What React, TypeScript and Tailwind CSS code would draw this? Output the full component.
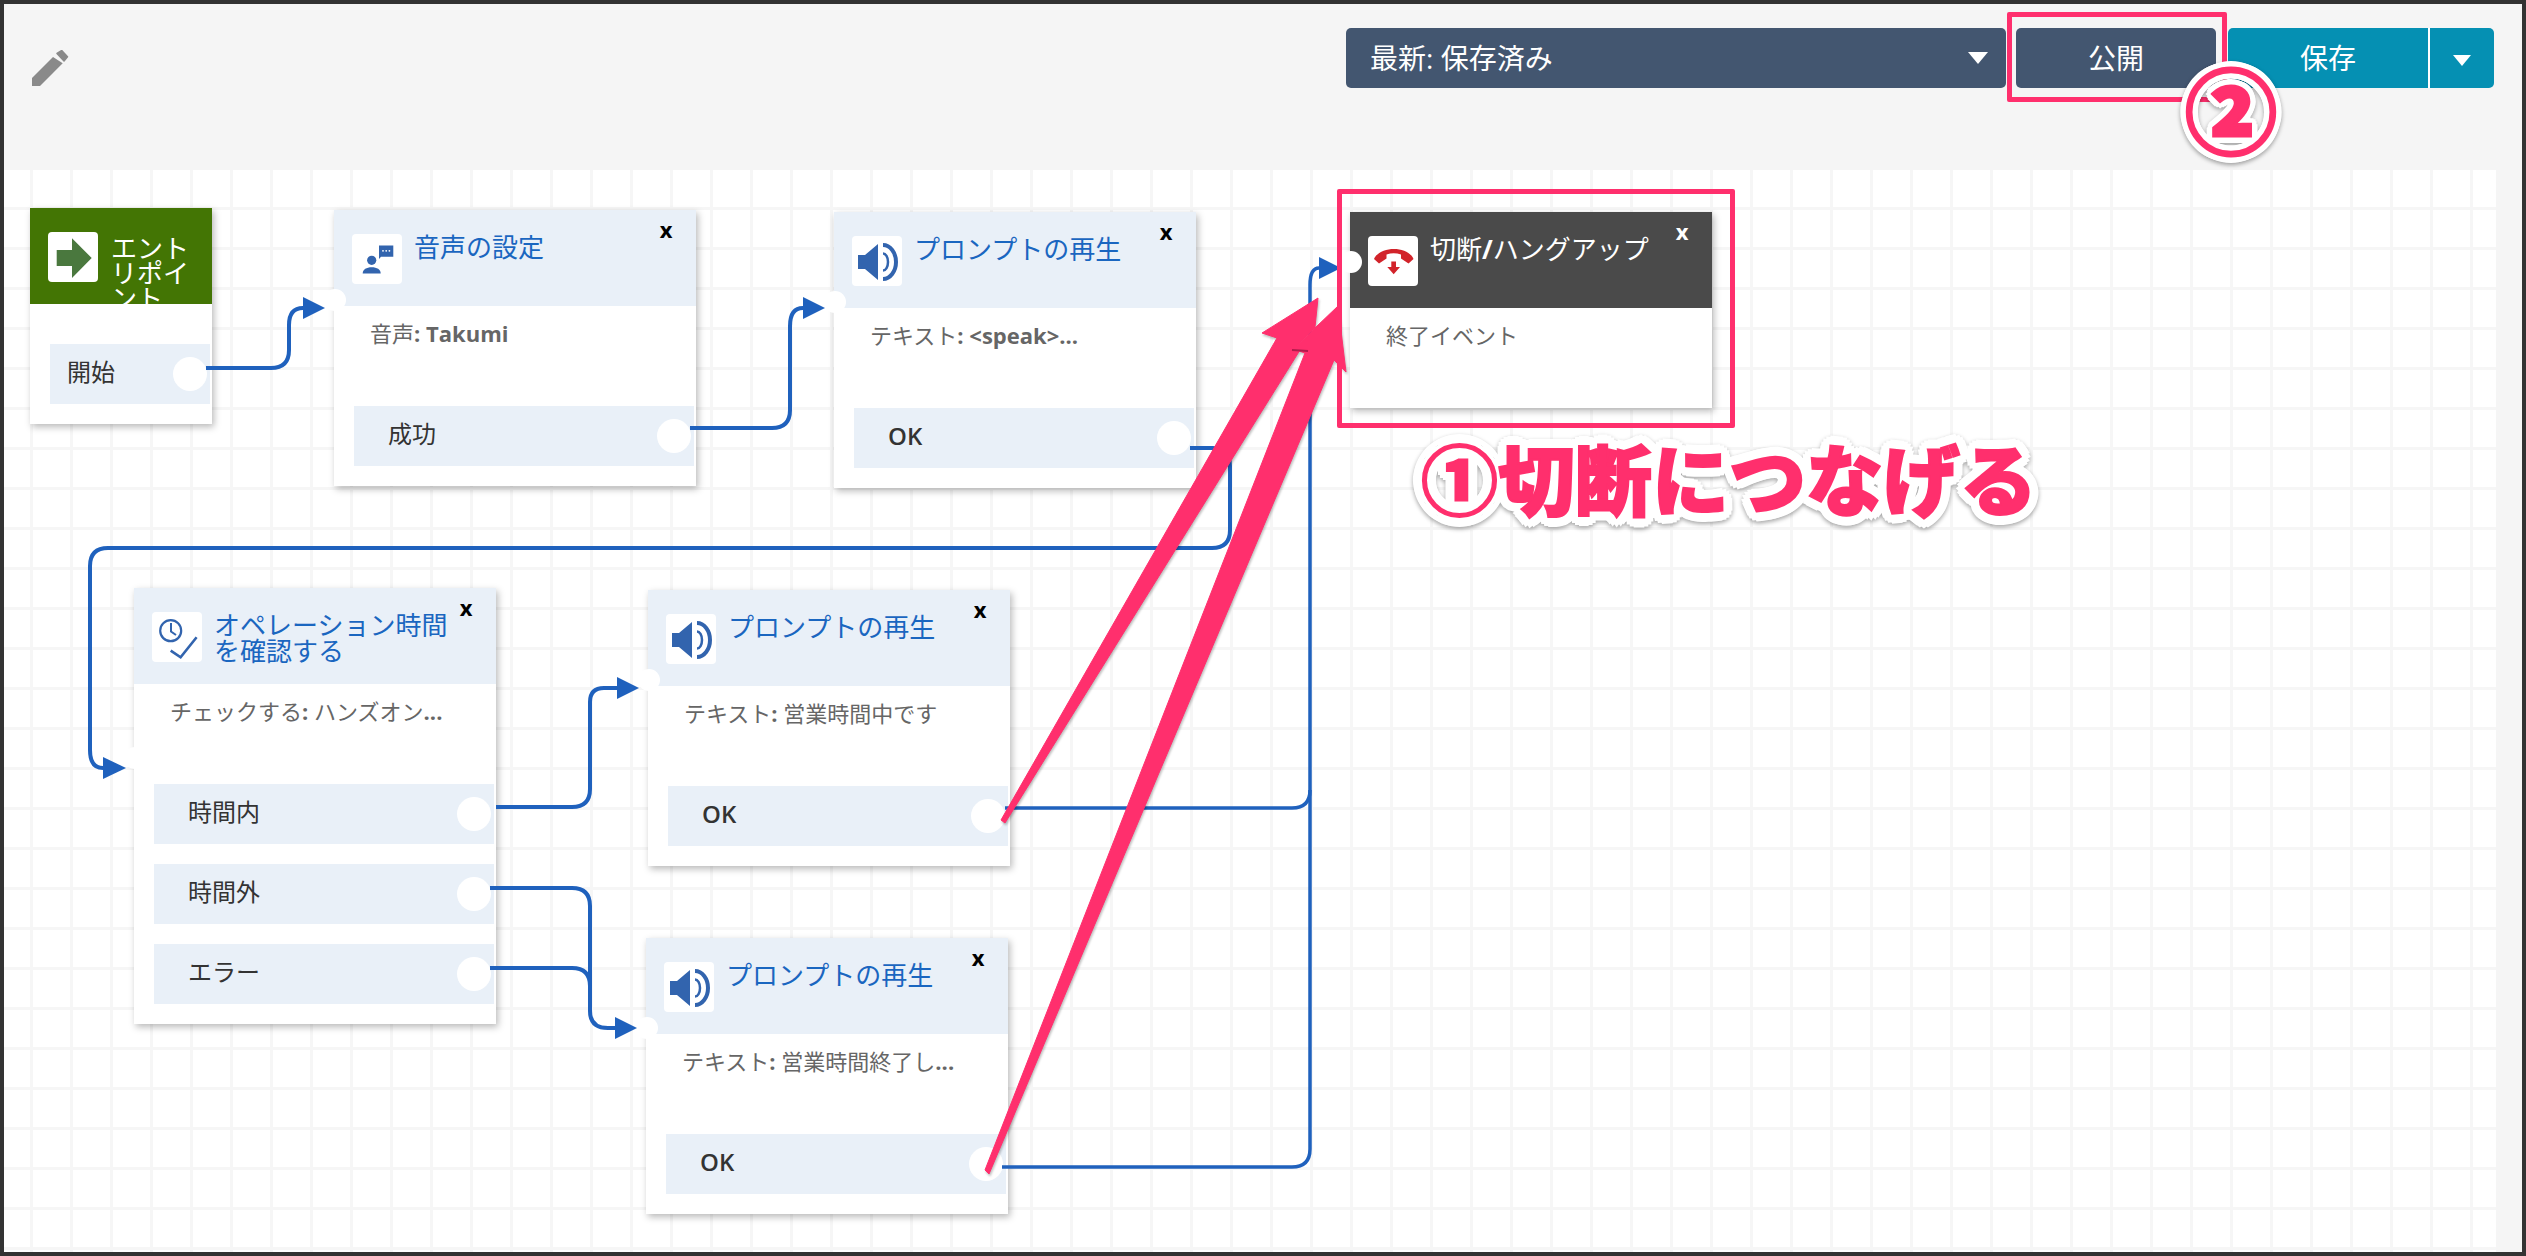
import React from "react";

const BLUE = "#3264ae";

function Speaker() {
  return (
    <svg viewBox="0 0 50 50" className="w-[50px] h-[50px]">
      <path d="M6 19H13L26 8V44L13 33H6Z" fill={BLUE} />
      <path d="M31 9A13 17 0 0 1 31 43" fill="none" stroke={BLUE} strokeWidth="4" />
      <path d="M31 17.5A5 8.5 0 0 1 31 34.5" fill="none" stroke={BLUE} strokeWidth="2.5" />
    </svg>
  );
}

function EntryArrow() {
  return (
    <svg viewBox="0 0 50 50" className="w-[50px] h-[50px]">
      <path d="M8.7 18H24V6.3L43.7 26 24 46V34H8.7Z" fill="#4a783e" />
    </svg>
  );
}

function Person() {
  return (
    <svg viewBox="0 0 50 50" className="w-[50px] h-[50px]">
      <circle cx="19.7" cy="26.3" r="4.6" fill={BLUE} />
      <path d="M10.7 39.5C10.7 35.5 14.5 33.3 19.7 33.3S28.7 35.5 28.7 39.5Z" fill={BLUE} />
      <path d="M27 11.5H41.3V22.7H29L27 25Z" fill={BLUE} />
      <circle cx="31" cy="16.8" r="0.9" fill="#fff" />
      <circle cx="34.2" cy="16.8" r="0.9" fill="#fff" />
      <circle cx="37.4" cy="16.8" r="0.9" fill="#fff" />
    </svg>
  );
}

function ClockCheck() {
  return (
    <svg viewBox="0 0 50 50" className="w-[50px] h-[50px]">
      <circle cx="18.7" cy="18.7" r="10.5" fill="none" stroke={BLUE} strokeWidth="2.2" />
      <path d="M19 11V19.5L24 23" fill="none" stroke={BLUE} strokeWidth="2" />
      <path d="M18.7 38.7L28.6 45.3L44.6 25.3" fill="none" stroke={BLUE} strokeWidth="2.6" />
    </svg>
  );
}

function Hangup() {
  return (
    <svg viewBox="0 0 50 50" className="w-[50px] h-[50px]">
      <path d="M6 23C12 9.5 40 9.5 45.5 23L40.5 27.5L33 22.5V18.5C28 16.8 23.5 16.8 18.5 18.5V22.5L11 27.5Z" fill="#d2232a" />
      <path d="M23.3 25.5H28V31H32L25.7 38.3 19.3 31H23.3Z" fill="#d2232a" />
    </svg>
  );
}

function IconBox({ children }: { children: React.ReactNode }) {
  return <div className="w-[50px] h-[50px] shrink-0 bg-white rounded-[4px]">{children}</div>;
}

function Row({ label, wide = true }: { label: string; wide?: boolean }) {
  return (
    <div className={`relative h-[60px] bg-[#e9f0f8] flex items-center pb-[4px] text-[24px] text-[#333] ${wide ? "pl-[34px]" : "pl-[17px]"}`}>
      <span className={label === "OK" ? "font-semibold" : "font-normal"}>{label}</span>
      <div className="absolute right-[3px] top-[13px] w-[34px] h-[34px] rounded-full bg-white" />
    </div>
  );
}

function Close({ light = false }: { light?: boolean }) {
  return (
    <div className={`absolute left-[322px] top-[5px] w-[20px] text-center text-[22px] leading-[28px] font-bold ${light ? "text-white" : "text-black"}`}>
      x
    </div>
  );
}

function Input({ className }: { className: string }) {
  return <div className={`absolute left-[-10px] w-[22px] h-[22px] rounded-full bg-white ${className}`} />;
}

function Node({
  pos,
  title,
  icon,
  body,
  rows,
  inputTop,
}: {
  pos: string;
  title: React.ReactNode;
  icon: React.ReactNode;
  body: React.ReactNode;
  rows: string[];
  inputTop: string;
}) {
  return (
    <div className={`absolute w-[362px] flex flex-col bg-white shadow-[2px_3px_7px_rgba(0,0,0,0.28)] ${pos}`}>
      <div className="h-[96px] bg-[#e9f0f8] flex items-start pt-[24px] pl-[18px] gap-[12px]">
        <IconBox>{icon}</IconBox>
        <div className="w-[240px] text-[26px] leading-[26px] text-[#1a66c0]">{title}</div>
      </div>
      <div className="h-[100px] pt-[11px] pl-[36px] text-[22px] leading-[32px] text-[#666]">{body}</div>
      {rows.length > 0 && (
        <div className="flex flex-col gap-[20px] pl-[20px] pr-[2px] pb-[20px]">
          {rows.map((r) => (
            <Row key={r} label={r} />
          ))}
        </div>
      )}
      <Close />
      <Input className={inputTop} />
    </div>
  );
}

function Pencil() {
  return (
    <svg viewBox="0 0 37 37" className="w-[37px] h-[37px] ml-[28px] mt-[46px] mr-auto">
      <path d="M0 36V28L21 7L30.7 13.3L8 36Z" fill="#8a8a8a" />
      <path d="M25 3.5L29.7 0.5L35.5 6.7L32 11Z" fill="#8a8a8a" stroke="#8a8a8a" strokeWidth="1.5" strokeLinejoin="round" />
    </svg>
  );
}

export default function App() {
  return (
    <div className="relative w-[2526px] h-[1256px] p-1 bg-[#333] overflow-hidden font-['Open_Sans','Noto_Sans_CJK_JP',sans-serif]">
      <div className="flex flex-col h-full bg-[#f5f5f5]">
        <header className="h-[166px] shrink-0 flex items-start pr-[28px]">
          <Pencil />
          <div className="flex items-center mt-[24px] text-white text-[28px]">
            <div className="w-[660px] h-[60px] rounded-[5px] bg-[#435670] flex items-center pl-[24px] pr-[18px]">
              <span className="mr-auto">最新: 保存済み</span>
              <span className="w-0 h-0 border-x-[10px] border-t-[12px] border-x-transparent border-t-white" />
            </div>
            <div className="ml-[10px] w-[200px] h-[60px] rounded-[5px] bg-[#435670] flex items-center justify-center">公開</div>
            <div className="ml-[12px] w-[202px] h-[60px] rounded-l-[5px] bg-[#0590b3] flex items-center justify-center border-r-2 border-white">保存</div>
            <div className="w-[64px] h-[60px] rounded-r-[5px] bg-[#0590b3] flex items-center justify-center pt-[4px]">
              <span className="w-0 h-0 border-x-[9px] border-t-[11px] border-x-transparent border-t-white" />
            </div>
          </div>
        </header>
        <main className="relative flex-1 mr-[26px] bg-white bg-[linear-gradient(to_right,#f6f6f6_3px,transparent_3px),linear-gradient(to_bottom,#f6f6f6_3px,transparent_3px)] bg-[size:40px_40px] bg-[position:26px_37px]">
          {/* Entry */}
          <div className="absolute left-[26px] top-[38px] w-[182px] h-[216px] flex flex-col bg-white shadow-[2px_3px_7px_rgba(0,0,0,0.28)]">
            <div className="h-[96px] shrink-0 overflow-hidden bg-[#437504] flex items-start pt-[24px] pl-[18px] gap-[13px]">
              <IconBox>
                <EntryArrow />
              </IconBox>
              <div className="w-[80px] mt-[4px] text-[26px] leading-[25px] text-white">エントリポイント</div>
            </div>
            <div className="mt-[40px] pl-[20px] pr-[2px]">
              <Row label="開始" wide={false} />
            </div>
          </div>

          <Node
            pos="left-[330px] top-[40px] h-[276px]"
            title="音声の設定"
            icon={<Person />}
            body={<>音声<b>: Takumi</b></>}
            rows={["成功"]}
            inputTop="top-[79px]"
          />
          <Node
            pos="left-[830px] top-[42px] h-[276px]"
            title="プロンプトの再生"
            icon={<Speaker />}
            body={<>テキスト<b>: &lt;speak&gt;...</b></>}
            rows={["OK"]}
            inputTop="top-[79px]"
          />
          {/* Disconnect */}
          <div className="absolute left-[1346px] top-[42px] w-[362px] h-[196px] flex flex-col bg-white shadow-[2px_3px_7px_rgba(0,0,0,0.28)]">
            <div className="h-[96px] bg-[#4a4a4a] flex items-start pt-[24px] pl-[18px] gap-[12px]">
              <IconBox>
                <Hangup />
              </IconBox>
              <div className="text-[26px] leading-[26px] text-white">
                切断<b>/</b>ハングアップ
              </div>
            </div>
            <div className="pt-[11px] pl-[36px] text-[22px] leading-[32px] text-[#666]">終了イベント</div>
            <Close light />
            <Input className="top-[39px]" />
          </div>
          <Node
            pos="left-[130px] top-[418px] h-[436px]"
            title="オペレーション時間を確認する"
            icon={<ClockCheck />}
            body={<>チェックする<b>:</b> ハンズオン<b>...</b></>}
            rows={["時間内", "時間外", "エラー"]}
            inputTop="top-[159px]"
          />
          <Node
            pos="left-[644px] top-[420px] h-[276px]"
            title="プロンプトの再生"
            icon={<Speaker />}
            body={<>テキスト<b>:</b> 営業時間中です</>}
            rows={["OK"]}
            inputTop="top-[79px]"
          />
          <Node
            pos="left-[642px] top-[768px] h-[276px]"
            title="プロンプトの再生"
            icon={<Speaker />}
            body={<>テキスト<b>:</b> 営業時間終了し<b>...</b></>}
            rows={["OK"]}
            inputTop="top-[79px]"
          />
        </main>
      </div>

      {/* Wires and hand-drawn arrows */}
      <svg viewBox="0 0 2526 1256" className="absolute inset-0 w-[2526px] h-[1256px] pointer-events-none">
        <g fill="none" stroke="#1f61bd" strokeWidth="4">
          <path d="M206 368H271Q289 368 289 350V325Q289 308 303 308" />
          <path d="M690 428H772Q790 428 790 410V326Q790 308 803 308" />
          <path d="M1190 448H1212Q1230 448 1230 466V530Q1230 548 1212 548H108Q90 548 90 566V750Q90 768 103 768" />
          <path d="M496 807H572Q590 807 590 789V702Q590 688 604 688H617" />
          <path d="M490 888H572Q590 888 590 906V1011Q590 1028 608 1028H615" />
          <path d="M490 968H572Q590 968 590 986" />
          <path d="M1005 808H1292Q1310 808 1310 790V285Q1310 268 1319 268" strokeWidth="3.5" />
          <path d="M1002 1167H1292Q1310 1167 1310 1149V790" strokeWidth="3.5" />
        </g>
        <g fill="#1f61bd">
          <polygon points="303,297 325,308 303,319" />
          <polygon points="803,297 825,308 803,319" />
          <polygon points="103,757 126,768 103,779" />
          <polygon points="617,677 639,688 617,699" />
          <polygon points="615,1017 637,1028 615,1039" />
          <polygon points="1319,257 1341,268 1319,279" />
        </g>
        <g fill="#ff2f6d" stroke="#ff2f6d" strokeWidth="1" strokeLinejoin="round" className="drop-shadow-[1px_2px_1px_rgba(0,0,0,0.25)]">
          <polygon points="1001,820 1277,338 1262,333 1318,298 1315,327 1293,349 1300,350 1005,823" />
          <polygon points="985,1170 1305,353 1293,349 1338,306 1346,372 1334,360 989,1174" />
        </g>
        <path d="M1292 350L1308 351" stroke="#b01c4c" strokeWidth="2" />
      </svg>

      {/* Annotations */}
      <div className="absolute left-[1337px] top-[189px] w-[398px] h-[239px] border-[5px] border-[#ff2f6d] rounded-[2px]" />
      <div className="absolute left-[2007px] top-[12px] w-[220px] h-[90px] border-[5px] border-[#ff2f6d] rounded-[2px]" />
      <div className="absolute left-[2180px] top-[49px] w-[102px] h-[116px] flex items-center justify-center text-[92px] leading-none font-black text-[#ff2f6d] font-['Noto_Sans_CJK_JP',sans-serif] [-webkit-text-stroke:3px_#ff2f6d] [text-shadow:7px_0_#fff,-7px_0_#fff,0_7px_#fff,0_-7px_#fff,5px_5px_#fff,-5px_5px_#fff,5px_-5px_#fff,-5px_-5px_#fff,3px_0_#fff,-3px_0_#fff,0_3px_#fff,0_-3px_#fff,6px_3px_#fff,-6px_3px_#fff,6px_-3px_#fff,-6px_-3px_#fff,3px_6px_#fff,-3px_6px_#fff,3px_-6px_#fff,-3px_-6px_#fff] drop-shadow-[0_2px_2px_rgba(0,0,0,0.35)]">
        ②
      </div>
      <div className="absolute left-[1421px] top-[425px] whitespace-nowrap text-[77px] leading-[104px] font-black text-[#ff2f6d] font-['Noto_Sans_CJK_JP',sans-serif] [-webkit-text-stroke:2px_#ff2f6d] [text-shadow:10px_0_#fff,-10px_0_#fff,0_10px_#fff,0_-10px_#fff,7px_7px_#fff,-7px_7px_#fff,7px_-7px_#fff,-7px_-7px_#fff,9px_4px_#fff,-9px_4px_#fff,9px_-4px_#fff,-9px_-4px_#fff,4px_9px_#fff,-4px_9px_#fff,4px_-9px_#fff,-4px_-9px_#fff,5px_0_#fff,-5px_0_#fff,0_5px_#fff,0_-5px_#fff,3px_3px_#fff,-3px_3px_#fff,3px_-3px_#fff,-3px_-3px_#fff] drop-shadow-[0_2px_2px_rgba(0,0,0,0.35)]">
        ①切断につなげる
      </div>
    </div>
  );
}
